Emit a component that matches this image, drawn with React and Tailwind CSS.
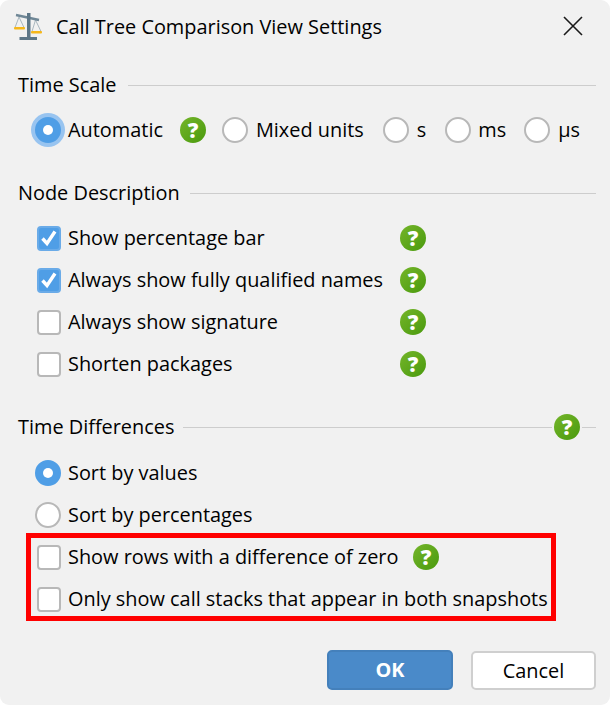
function Help({ className = "" }) {
  return (
    <svg width="26" height="26" viewBox="0 0 26 26" className={"shrink-0 " + className}>
      <defs>
        <linearGradient id="hg" x1="0" y1="0" x2="1" y2="1">
          <stop offset="0" stopColor="#74b52a" />
          <stop offset="1" stopColor="#4a9a0e" />
        </linearGradient>
      </defs>
      <circle cx="13" cy="13" r="13" fill="url(#hg)" />
      <text x="13" y="20.5" textAnchor="middle" fill="#fff" fontSize="21" fontWeight="800" fontFamily="'Open Sans', sans-serif">?</text>
    </svg>
  );
}
function Radio({ checked, focus }) {
  return (
    <span className={"relative flex items-center justify-center shrink-0 w-[26px] h-[26px] rounded-full border-2 " + (checked ? "bg-[#4f9ee6] border-[#4f9ee6]" : "bg-white border-[#b8b8b8]") + (focus ? " ring-[4px] ring-[#98c4f0]" : "")}>
      {checked && <span className="w-[10px] h-[10px] rounded-full bg-white" />}
    </span>
  );
}
function Check({ checked }) {
  return (
    <span className={"flex items-center justify-center shrink-0 w-[24px] h-[25px] rounded-[4px] border-2 " + (checked ? "bg-[#4f9ee6] border-[#6aabe8]" : "bg-white border-[#b8b8b8]")}>
      {checked && (
        <svg width="20" height="20" viewBox="0 0 20 20" fill="none">
          <path d="M3.5 10.5 L8 15.5 L16 3.5" stroke="#fff" strokeWidth="3.4" />
        </svg>
      )}
    </span>
  );
}
function Section({ title, help, gap = "mr-[10px]", children }) {
  return (
    <section>
      <div className="flex items-center h-[28px]">
        <span className={gap}>{title}</span>
        <span className="flex-1 h-px bg-[#cdcdcd]" />
        {help && <Help className="mx-[2px]" />}
        {help && <span className="w-[14px] h-px bg-[#cdcdcd]" />}
      </div>
      {children}
    </section>
  );
}
function Row({ kind, checked, label, help, helpCol }) {
  return (
    <div className={"flex items-center h-[42px] " + (kind === "radio" ? "pl-[17px]" : "pl-[19px]")}>
      {kind === "radio" ? <Radio checked={checked} /> : <Check checked={checked} />}
      <span className={"ml-[7px] whitespace-nowrap " + (helpCol ? "w-[332px]" : "")}>{label}</span>
      {help && <Help className={helpCol ? "" : "ml-[15px]"} />}
    </div>
  );
}
function Scales() {
  return (
    <svg width="30" height="30" viewBox="14 12 30 30" className="shrink-0">
      <path d="M19 17 L24 27.5 M19 17 L15 27.5 M35.5 20 L32 31.5 M35.5 20 L41 31.5" stroke="#a9b7bf" strokeWidth="1" fill="none" />
      <path d="M16 15 L39 20" stroke="#6f8796" strokeWidth="2.4" />
      <rect x="27" y="13" width="3.5" height="25" fill="#5d7687" />
      <rect x="19.5" y="37" width="17.5" height="3" fill="#5d7687" />
      <rect x="14" y="27" width="11" height="2.5" rx="1" fill="#f6b71a" />
      <rect x="31" y="31" width="11" height="2.5" rx="1" fill="#f6b71a" />
    </svg>
  );
}
export default function App() {
  return (
    <div className="w-[610px] h-[705px] bg-white">
      <div className="relative w-[610px] h-[705px] bg-[#f1f1f1] rounded-[9px] text-[19.9px] leading-[28px] text-black overflow-hidden" style={{ fontFamily: "'Open Sans', 'Noto Sans', sans-serif" }}>
        <header className="flex items-center h-[54px] pl-[14px] pr-[27px]">
          <Scales />
          <span className="ml-[12px] flex-1 whitespace-nowrap">Call Tree Comparison View Settings</span>
          <svg width="20" height="20" viewBox="0 0 20 20" fill="none" stroke="#1a1a1a" strokeWidth="1.6" className="mb-[3px]"><path d="M1 1 L19 19 M19 1 L1 19" /></svg>
        </header>
        <main className="pl-[18px] pr-[14px]">
          <div className="pt-[17px]">
            <Section title="Time Scale" gap="mr-[12px]">
              <div className="flex items-center h-[42px] mt-[10px] pl-[17px]">
                <Radio checked focus />
                <span className="ml-[7px]">Automatic</span>
                <Help className="ml-[17px]" />
                <span className="ml-[16px]"><Radio /></span>
                <span className="ml-[8px]">Mixed units</span>
                <span className="ml-[19px]"><Radio /></span>
                <span className="ml-[8px]">s</span>
                <span className="ml-[19px]"><Radio /></span>
                <span className="ml-[7px]">ms</span>
                <span className="ml-[18px]"><Radio /></span>
                <span className="ml-[8px]">µs</span>
              </div>
            </Section>
          </div>
          <div className="mt-[28px]">
            <Section title="Node Description">
              <div className="mt-[10px]">
                <Row kind="check" checked label="Show percentage bar" help helpCol />
                <Row kind="check" checked label="Always show fully qualified names" help helpCol />
                <Row kind="check" label="Always show signature" help helpCol />
                <Row kind="check" label="Shorten packages" help helpCol />
              </div>
            </Section>
          </div>
          <div className="mt-[28px]">
            <Section title="Time Differences" help gap="mr-[9px]">
              <div className="mt-[11px]">
                <Row kind="radio" checked label="Sort by values" />
                <Row kind="radio" label="Sort by percentages" />
                <Row kind="check" label="Show rows with a difference of zero" help />
                <Row kind="check" label="Only show call stacks that appear in both snapshots" />
              </div>
            </Section>
          </div>
        </main>
        <div className="absolute left-[26px] top-[533px] w-[530px] h-[88px] border-[5px] border-[#ff0000]" />
        <footer className="flex justify-end items-end gap-[18px] pr-[14px] mt-[30px]">
          <button className="w-[126px] h-[40px] rounded-[5px] bg-[#4a8ac9] border-2 border-[#4480bb] text-white font-bold">OK</button>
          <button className="w-[125px] h-[39px] rounded-[5px] bg-white border-2 border-[#cfcfcf]">Cancel</button>
        </footer>
      </div>
    </div>
  );
}
